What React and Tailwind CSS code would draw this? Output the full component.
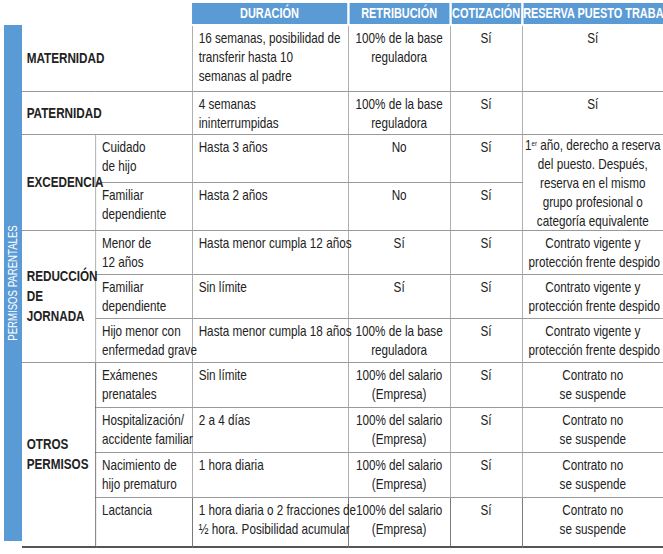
const V = 'border-r border-[#555]'
const H = 'border-b border-[#999]'
const B = 'border-b-2 border-b-[#555]'

function Cell({ children, className = '', ...rest }) {
  return (
    <td className={`align-top px-[8px] pt-[2px] leading-[19px] ${className}`} {...rest}>
      {children}
    </td>
  )
}

function Cat({ children, rowSpan, colSpan, last }) {
  return (
    <td rowSpan={rowSpan} colSpan={colSpan} className={`align-middle pl-[6px] font-bold leading-[20px] text-[15px] ${V} ${last ? B : H}`}>
      {children}
    </td>
  )
}

export default function App() {
  return (
    <div className="w-[663px] h-[554px] bg-white text-[#222] overflow-hidden" style={{ fontFamily: '"Liberation Sans", Arial, sans-serif' }}>
      <div className="flex pt-[3px]">
        <div className="w-[22px] shrink-0 pt-[22px] pl-[4px]">
          <div className="bg-[#5b9bd5] w-[18px] h-[516px] flex items-center justify-center">
            <span className="text-white text-[12px] whitespace-nowrap -rotate-90 scale-x-[0.8]">PERMISOS PARENTALES</span>
          </div>
        </div>
        <div className="w-[641px] shrink-0">
          <table className="border-collapse table-fixed w-[822px] origin-top-left scale-x-[0.78] text-[15px]">
            <colgroup>
              <col className="w-[94px]" />
              <col className="w-[124px]" />
              <col className="w-[200px]" />
              <col className="w-[131px]" />
              <col className="w-[92px]" />
              <col className="w-[181px]" />
            </colgroup>
            <thead>
              <tr className="h-[20px]">
                <th colSpan={2}></th>
                {['DURACIÓN', 'RETRIBUCIÓN', 'COTIZACIÓN', 'RESERVA PUESTO TRABAJO'].map((t, i) => (
                  <th key={t} className={`bg-[#5b9bd5] text-white font-bold text-[14px] p-0 whitespace-nowrap ${i < 3 ? 'border-r-[3px] border-white' : ''}`}>{t}</th>
                ))}
              </tr>
              <tr className="h-[2px]"><th colSpan={6}></th></tr>
            </thead>
            <tbody>
              <tr className="h-[65px]">
                <Cat colSpan={2}>MATERNIDAD</Cat>
                <Cell className={`${V} ${H}`}>16 semanas, posibilidad de transferir hasta 10 semanas al padre</Cell>
                <Cell className={`${V} ${H} text-center`}>100% de la base reguladora</Cell>
                <Cell className={`${V} ${H} text-center`}>Sí</Cell>
                <Cell className={`${H} text-center`}>Sí</Cell>
              </tr>
              <tr className="h-[43px]">
                <Cat colSpan={2}>PATERNIDAD</Cat>
                <Cell className={`${V} ${H}`}>4 semanas<br />ininterrumpidas</Cell>
                <Cell className={`${V} ${H} text-center`}>100% de la base reguladora</Cell>
                <Cell className={`${V} ${H} text-center`}>Sí</Cell>
                <Cell className={`${H} text-center`}>Sí</Cell>
              </tr>
              <tr className="h-[45px]">
                <Cat rowSpan={2}>EXCEDENCIA</Cat>
                <Cell className={`${V} ${H}`}>Cuidado<br />de hijo</Cell>
                <Cell className={`${V} ${H}`}>Hasta 3 años</Cell>
                <Cell className={`${V} ${H} text-center`}>No</Cell>
                <Cell className={`${V} ${H} text-center`}>Sí</Cell>
                <td rowSpan={2} className={`${H} text-center align-middle leading-[19px] px-[2px]`}>
                  1<sup className="text-[8px]">er</sup> año, derecho a reserva del puesto. Después, reserva en el mismo grupo profesional o categoría equivalente
                </td>
              </tr>
              <tr className="h-[44px]">
                <Cell className={`${V} ${H}`}>Familiar dependiente</Cell>
                <Cell className={`${V} ${H}`}>Hasta 2 años</Cell>
                <Cell className={`${V} ${H} text-center`}>No</Cell>
                <Cell className={`${V} ${H} text-center`}>Sí</Cell>
              </tr>
              {[
                ['Menor de', '12 años', 'Hasta menor cumpla 12 años', 'Sí'],
                ['Familiar', 'dependiente', 'Sin límite', 'Sí'],
                ['Hijo menor con', 'enfermedad grave', 'Hasta menor cumpla 18 años', <>100% de la base<br />reguladora</>],
              ].map((r, i) => (
                <tr key={i} className="h-[44px]">
                  {i === 0 && <Cat rowSpan={3}>REDUCCIÓN<br />DE JORNADA</Cat>}
                  <Cell className={`${V} ${H} whitespace-nowrap`}>{r[0]}<br />{r[1]}</Cell>
                  <Cell className={`${V} ${H} whitespace-nowrap`}>{r[2]}</Cell>
                  <Cell className={`${V} ${H} text-center`}>{r[3]}</Cell>
                  <Cell className={`${V} ${H} text-center`}>Sí</Cell>
                  <Cell className={`${H} text-center whitespace-nowrap`}>Contrato vigente y<br />protección frente despido</Cell>
                </tr>
              ))}
              {[
                ['Exámenes', 'prenatales', 'Sin límite'],
                ['Hospitalización/', 'accidente familiar', '2 a 4 días'],
                ['Nacimiento de', 'hijo prematuro', '1 hora diaria'],
                ['Lactancia', '', <>1 hora diaria o 2 fracciones de<br />½ hora. Posibilidad acumular</>],
              ].map((r, i) => {
                const bb = i === 3 ? B : H
                return (
                  <tr key={i} className={i === 3 ? 'h-[50px]' : 'h-[45px]'}>
                    {i === 0 && <Cat rowSpan={4} last>OTROS<br />PERMISOS</Cat>}
                    <Cell className={`${V} ${bb} whitespace-nowrap`}>{r[0]}{r[1] && <><br />{r[1]}</>}</Cell>
                    <Cell className={`${V} ${bb} whitespace-nowrap`}>{r[2]}</Cell>
                    <Cell className={`${V} ${bb} text-center`}>100% del salario<br />(Empresa)</Cell>
                    <Cell className={`${V} ${bb} text-center`}>Sí</Cell>
                    <Cell className={`${bb} text-center`}>Contrato no<br />se suspende</Cell>
                  </tr>
                )
              })}
            </tbody>
          </table>
        </div>
      </div>
      <div className="pl-[2px] pt-[3px] text-[12px] text-[#555] origin-left scale-x-[0.8] w-[300px]">
        Fuente: <span className="text-[#222]">CEOE y elaboración propia</span>
      </div>
    </div>
  )
}
